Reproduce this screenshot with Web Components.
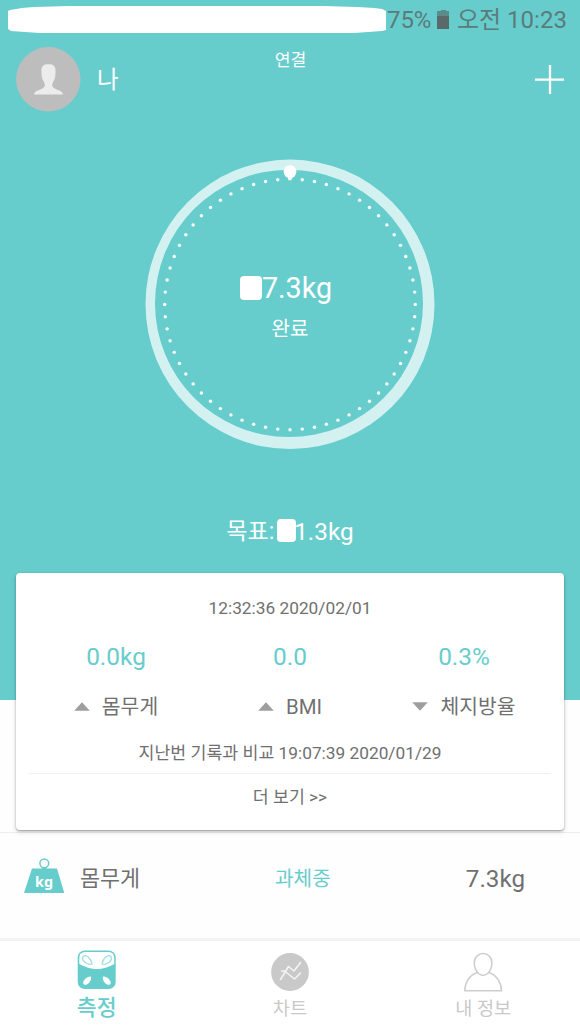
<!DOCTYPE html>
<html lang="ko">
<head>
<meta charset="utf-8">
<title>측정</title>
<style>
html,body{margin:0;padding:0}
body{width:580px;height:1031px;overflow:hidden;background:#fefefe;font-family:Roboto,"Noto Sans CJK KR",sans-serif;color:#707070;--teal:#67cdcc}
</style>
</head>
<body>
<scale-app></scale-app>
<script>
function define(name, html, setup) {
  const t = document.createElement('template');
  t.innerHTML = html;
  customElements.define(name, class extends HTMLElement {
    connectedCallback() {
      if (this.shadowRoot) return;
      this.attachShadow({mode: 'open'}).append(t.content.cloneNode(true));
      if (setup) setup(this, this.shadowRoot);
    }
  });
}

define('status-bar', `
<style>
:host{display:flex;height:40px;align-items:flex-start;color:#5a7b7b;font-size:24px;line-height:40px;white-space:pre}
.mask{flex:none;width:379px;height:28px;margin:6px 0 0 8px}
.pct{width:44px;letter-spacing:-.1px}
.bat{width:14px;height:20px;margin:9px 7px 0 5px;flex:none}
.time{letter-spacing:0}
</style>
<svg class="mask" viewBox="0 0 379 28"><path fill="#fff" d="M0 5 2 4 14 2 26 1 61 0H315L350 1 366 2 374 3 378 5V24L374 25 360 26 346 27H32L17 26 3 25 0 23Z"/></svg>
<span class="pct">75%</span>
<svg class="bat" viewBox="0 0 14 20"><path fill="#5c8b8b" d="M1 2h4V1h5v1h3v5H1z"/><path fill="#5a6969" d="M1 7h12v13H1z"/></svg>
<span class="time">오전 10:23</span>`);

define('user-avatar', `
<style>:host{display:block;width:65px;height:65px}svg{display:block}</style>
<svg width="65" height="65" viewBox="0 0 65 65"><circle cx="32.3" cy="32.2" r="32.2" fill="#bdbdbd"/>
<path fill="#ececec" d="M32.500 17c-5.500 0-7.500 3-7 8 0 3 .3 6 1.300 8 1 2 2 3 2 5 0 2.500-2 3.500-5 4.700-3 1.200-5.400 1.700-5.700 4.800h28.800c-.3-3.100-2.700-3.600-5.700-4.800-3-1.200-5-2.200-5-4.700 0-2 1-3 2-5 1-2 1.300-5 1.300-8 .5-5-1.500-8-7-8z"/></svg>`);

define('app-header', `
<style>
:host{display:grid;grid-template-columns:1fr 60px 1fr;height:65px;margin-top:7px;padding:0 15px 0 16px;color:#fff}
.me{display:flex;align-items:center;gap:16px;font-size:23.500px;line-height:24px}
.link{font-size:17.200px;line-height:26px;text-align:center}
.add{justify-self:end;align-self:center;display:block}
</style>
<div class="me"><user-avatar></user-avatar><span><slot></slot></span></div>
<div class="link">연결</div>
<svg class="add" width="31" height="31" viewBox="0 0 31 31"><path d="M16 1v29M1 15.700h29" stroke="#fff" stroke-width="2.300"/></svg>`);

define('weight-gauge', `
<style>
:host{display:grid;width:290px;height:290px;margin:47px auto 0;color:#fff}
svg,.t{grid-area:1/1}
.t{text-align:center;white-space:nowrap}
.v{display:flex;justify-content:center;align-items:center;margin-top:111px;padding-right:8px;font-size:28.700px;line-height:36px}
.v i{width:22px;height:24px;border-radius:4px;background:#fff;margin-top:-1px}
.s{font-size:20px;line-height:28px;margin-top:9px}
</style>
<svg width="290" height="290" viewBox="145 159 290 290"><path fill="#d3f1f0" fill-rule="evenodd" d="M145.500 304.300a144.500 144.700 0 1 1 289 0a144.500 144.700 0 1 1-289 0ZM155 303.400a134 133.700 0 1 0 268 0a134 133.700 0 1 0-268 0Z"/><g id="dots" fill="#fff"></g><circle cx="290" cy="171.600" r="6.400" fill="#fff"/><path fill="#fff" d="M287.500 177h5l-1 3.300h-3z"/></svg>
<div class="t"><div class="v"><i></i><span>7.3kg</span></div><div class="s">완료</div></div>`, (host, root) => {
  const g = root.getElementById('dots');
  for (let i = 1; i < 64; i++) {
    const a = i * Math.PI / 32;
    const c = document.createElementNS('http://www.w3.org/2000/svg', 'circle');
    c.setAttribute('cx', 290 + 125.3 * Math.sin(a));
    c.setAttribute('cy', 304.400 - 125.3 * Math.cos(a));
    c.setAttribute('r', 1.7);
    g.append(c);
  }
});

define('goal-line', `
<style>
:host{display:flex;justify-content:center;align-items:center;height:36px;margin-top:65px;color:#fff;font-size:24.300px;line-height:36px}
.k{font-size:23px}
i{width:19px;height:23px;border-radius:4px;background:#fff;margin:-3px -2px 0 3px}
</style><span class="k">목표:</span><i></i><span>1.3kg</span>`);

define('metric-delta', `
<style>
:host{display:flex;flex-direction:column;align-items:center;flex:1}
.v{color:var(--teal);font-size:24.400px;line-height:30px}
.l{display:flex;align-items:center;gap:12px;margin-top:20px;font-size:20.400px;line-height:30px}
svg{display:block;margin-top:-2px}
:host([dir-down]) svg{transform:scaleY(-1)}
</style>
<div class="v"><slot name="value"></slot></div>
<div class="l"><svg width="16" height="9" viewBox="0 0 16 9"><path fill="#9e9e9e" d="M8 .3 15.800 8.700H.2z"/></svg><span><slot></slot></span></div>`);

define('record-card', `
<style>
:host{display:flex;flex-direction:column;position:relative;box-sizing:border-box;height:257px;margin:-127px 16px 0;padding:22px 13px 0;background:#fff;border-radius:4px;box-shadow:0 1px 2px rgba(0,0,0,.3),0 2px 5px rgba(0,0,0,.16);text-align:center;font-size:17.300px;line-height:26px}
.m{display:flex;margin-top:21px}
.c{margin-top:18px}
.more{margin-top:7px;border-top:1px solid #f0f0f0;padding-top:10px}
</style>
<div>12:32:36 2020/02/01</div>
<div class="m">
<metric-delta><span slot="value">0.0kg</span>몸무게</metric-delta>
<metric-delta><span slot="value">0.0</span>BMI</metric-delta>
<metric-delta dir-down><span slot="value">0.3%</span>체지방율</metric-delta>
</div>
<div class="c">지난번 기록과 비교 19:07:39 2020/01/29</div>
<div class="more">더 보기 &gt;&gt;</div>`);

define('metric-row', `
<style>
:host{display:grid;grid-template-columns:56px 195px 1fr auto;align-items:center;box-sizing:border-box;height:107px;margin-top:2px;padding:0 55px 15px 24px;border-top:1px solid #eee;line-height:30px}
.n{font-size:21.800px}.s{font-size:20.200px;color:var(--teal)}.v{font-size:24.200px}
svg{display:block;margin-top:-6px}
text{font:bold 15px "Noto Sans","Open Sans",sans-serif}
</style>
<svg width="41" height="36" viewBox="0 0 41 36"><circle cx="20.300" cy="5.300" r="4.400" fill="none" stroke="#67cdcc" stroke-width="1.500"/><path fill="#67cdcc" d="M18 9.500h4.500v1H33L40.300 35H0L8 10.500h10z"/><text x="20" y="28.500" text-anchor="middle" fill="#fff" textLength="18" lengthAdjust="spacingAndGlyphs">kg</text></svg>
<span class="n">몸무게</span><span class="s">과체중</span><span class="v">7.3kg</span>`);

define('nav-tab', `
<style>
:host{display:flex;flex-direction:column;align-items:center;color:#c9c9c9;font-size:18.600px;line-height:24px;width:193.300px}
:host([active]){color:#67cdcc;font-size:21.600px;font-weight:500}
.i{height:42px;padding-top:9px;margin-bottom:5px}
:host([active]) .i{margin-bottom:4px}
</style><div class="i"><slot name="icon"></slot></div><span><slot></slot></span>`);

define('bottom-nav', `
<style>
:host{display:flex;height:92px;border-top:3px solid #f3f3f3;margin-top:-1px;background:#fff}
svg{display:block}
.b{margin-top:2px}
</style>
<nav-tab active><svg slot="icon" width="40" height="40" viewBox="0 0 40 40"><rect x=".7" y=".5" width="38" height="38.500" rx="7" fill="#67cdcc"/><path fill="#fff" d="M2.300 14V8Q2.300 2 8 2H31.500Q37.200 2 37.200 8V14Q20 24 2.300 14Z"/><g fill="none" stroke="#9edfdd" stroke-width="1.300"><path d="M6 6.500c3-2.700 8 1.500 9 7.500-5 1.500-11-3.500-9-7.500zM34 6.500c-3-2.700-8 1.500-9 7.500 5 1.500 11-3.500 9-7.500z"/></g><path fill="#fff" d="M14 26.500c1 4-3 9-6.500 8.300C4 33.500 8 26.500 14 26.500zM26 26.500c-1 4 3 9 6.500 8.300C36 33.500 32 26.500 26 26.500z"/></svg>측정</nav-tab>
<nav-tab><svg class="b" slot="icon" width="40" height="40" viewBox="0 0 40 40"><circle cx="20" cy="20" r="18.900" fill="#c9c9c9"/><path fill="none" stroke="#f4f4f4" stroke-width="1.600" stroke-linejoin="round" stroke-linecap="round" d="M10.500 27.500 18.500 14.500 24 19 30.500 10.500M11.500 19h3l10 8 6-6"/></svg>차트</nav-tab>
<nav-tab><svg class="b" slot="icon" width="40" height="40" viewBox="0 0 40 40"><g fill="none" stroke="#cdcdcd" stroke-width="1.500"><path d="M15.500 21.500C12 18 11.300 14 11.300 10.500a8.800 9 0 0 1 17.600 0c0 3.500-.8 7.500-4.300 11q-4.500 3.500-9.100 0zM14.500 20.500C6 23 2 31 1.800 38.700h36.700C38.300 31 34 23 25.700 20.500"/></g></svg>내 정보</nav-tab>`);

define('scale-app', `
<style>
:host{display:block;width:580px}
.hero{display:flow-root;height:700px;background:var(--teal)}
</style>
<div class="hero"><status-bar></status-bar><app-header>나</app-header><weight-gauge></weight-gauge><goal-line></goal-line></div>
<record-card></record-card><metric-row></metric-row><bottom-nav></bottom-nav>`);
</script>
</body>
</html>
